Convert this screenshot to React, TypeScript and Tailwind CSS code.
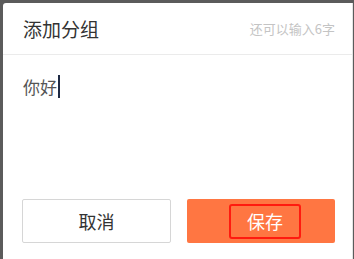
export default function App() {
  const font = { fontFamily: '"Noto Sans CJK SC", "Liberation Sans", sans-serif' };
  return (
    <div className="w-[354px] h-[259px] bg-[#5b5b5b] pl-[3px] pt-[3px]" style={font}>
      <div className="w-[350px] h-[256px] bg-white rounded-tl-[3px] border-r border-[#e4e4e4] flex flex-col">
        <div className="h-[52px] border-b border-[#ebebeb] flex items-center justify-between pl-[20px] pr-[17px]">
          <span className="text-[19px] text-[#333] leading-none">添加分组</span>
          <span className="text-[13px] text-[#c4c4c4] leading-none">还可以输入6字</span>
        </div>
        <div className="pl-[20px] pt-[17px] flex items-center h-[46px]">
          <span className="text-[17px] text-[#555] leading-none">你好</span>
          <span className="w-[1.5px] h-[23px] bg-[#1e2a44] ml-[1px]" />
        </div>
        <div className="flex-1" />
        <div className="flex gap-[16px] pl-[19px] pr-[17px] pb-[16px]">
          <button className="w-[149px] h-[44px] border border-[#d6d6d6] rounded-[2px] bg-white text-[18px] text-[#333]">
            取消
          </button>
          <button className="w-[148px] h-[44px] rounded-[2px] bg-[#ff7642] flex items-center justify-center">
            <span className="ml-[8px] w-[72px] h-[35px] border-[2px] border-[#ff1a0f] rounded-[3px] flex items-center justify-center text-[18px] text-white">
              保存
            </span>
          </button>
        </div>
      </div>
    </div>
  );
}
